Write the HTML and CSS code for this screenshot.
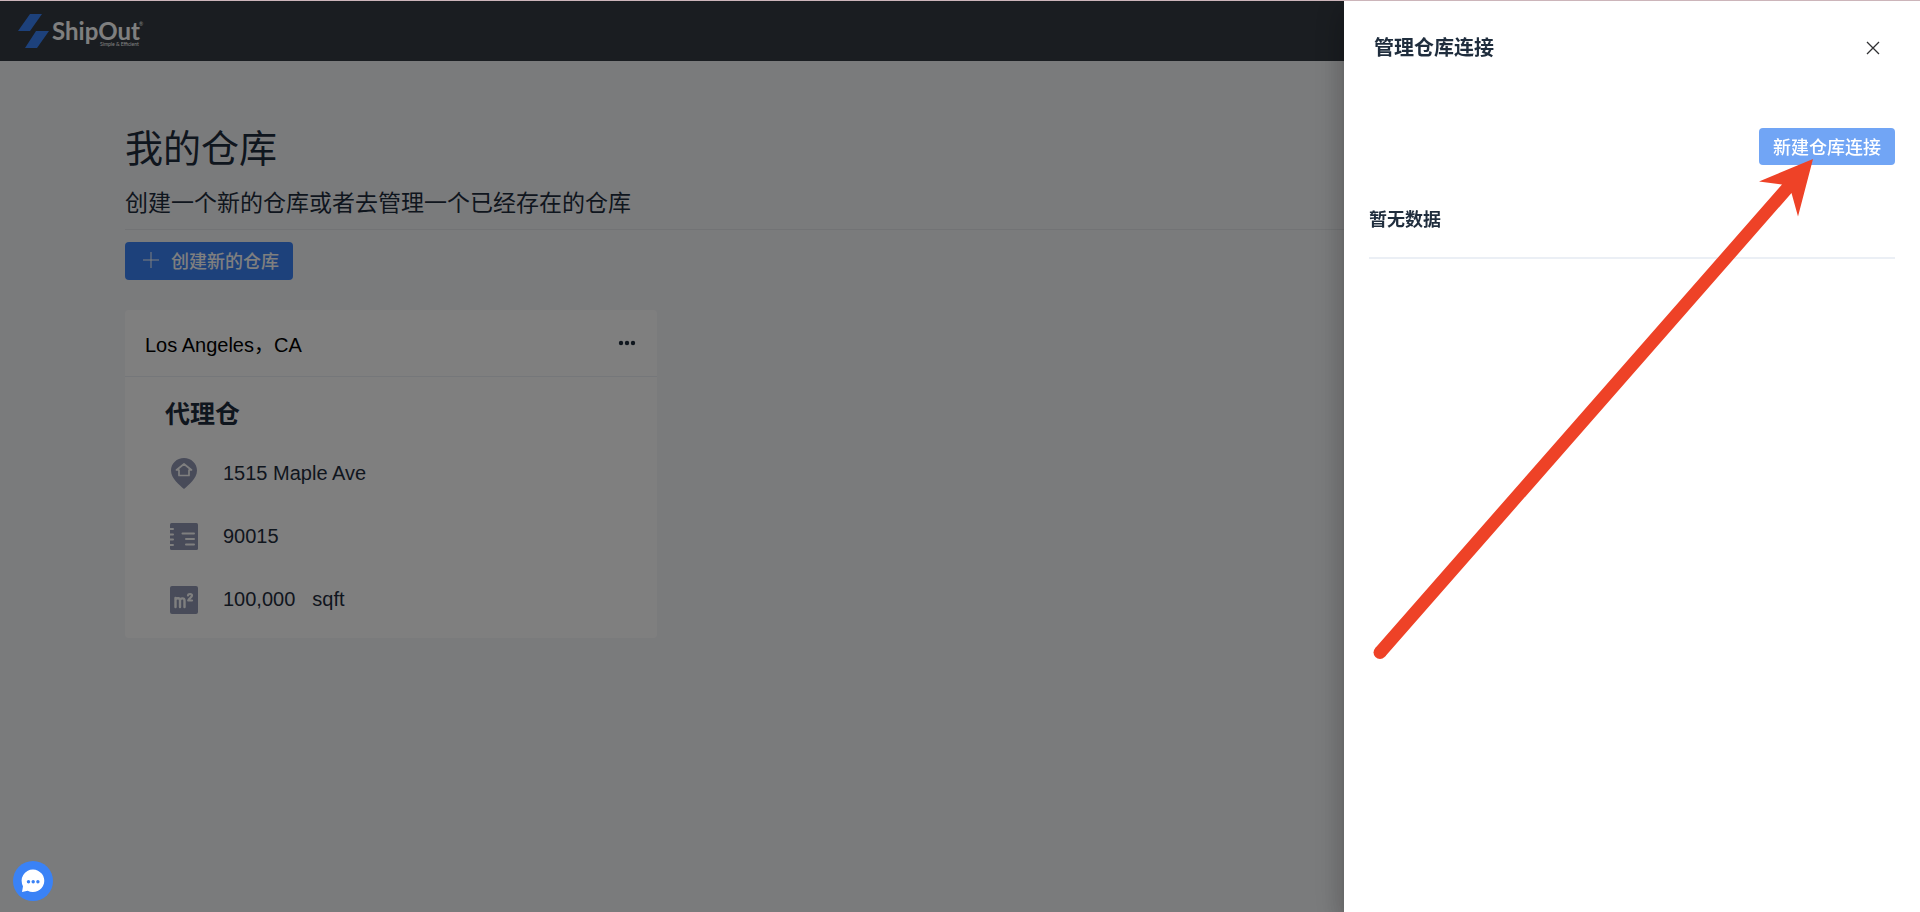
FILE: index.html
```html
<!DOCTYPE html>
<html lang="zh-CN">
<head>
    <meta charset="UTF-8">
    <meta name="viewport" content="width=device-width, initial-scale=1.0">
    <title>ShipOut</title>
    <link rel="stylesheet" href="styles.css">
</head>
<body>
    <header class="header">
        <a href="#" class="logo" aria-label="ShipOut">
            <svg width="128" height="40" viewBox="0 0 128 40">
                <path fill="#3a82f6" d="M12 3h12L12 20H0zM18 20h13L19 37H7z"/>
                <text class="logo-name" x="34" y="29">ShipOut</text>
                <text class="logo-tag" x="82" y="35">Simple &amp; Efficient</text>
                <text class="logo-tag" x="121" y="15">®</text>
            </svg>
        </a>
    </header>

    <main class="page">
        <h1 class="page-title">我的仓库</h1>
        <p class="page-subtitle">创建一个新的仓库或者去管理一个已经存在的仓库</p>
        <button type="button" class="btn btn-create">
            <svg width="16" height="16" viewBox="0 0 16 16" stroke="#fff" fill="none"><path d="M8 0v16M0 8h16"/></svg>
            <span>创建新的仓库</span>
        </button>

        <div class="cards">
            <section class="card">
                <div class="card-header">
                    <span>Los Angeles&#xFF0C;CA</span>
                    <button type="button" class="card-more" aria-label="更多">
                        <svg width="20" height="6" viewBox="0 0 20 6" fill="#1f2d3d"><circle cx="4" cy="3" r="2.200"/><circle cx="10" cy="3" r="2.200"/><circle cx="16" cy="3" r="2.200"/></svg>
                    </button>
                </div>
                <div class="card-body">
                    <h2 class="card-title">代理仓</h2>
                    <ul class="info">
                        <li>
                            <svg width="28" height="32" viewBox="0 0 28 32">
                                <path fill="#9197b3" d="M14 0C6.800 0 1 5.500 1 12.500c0 8 8.500 14.500 13 18.500C18.500 27 27 20.500 27 12.500 27 5.500 21.200 0 14 0z"/>
                                <path fill="none" stroke="#fff" stroke-width="1.700" stroke-linejoin="round" stroke-linecap="round" d="M6.500 12L14 6l7.500 6H19v5.500H9V12z"/>
                            </svg>
                            <span>1515 Maple Ave</span>
                        </li>
                        <li>
                            <svg width="28" height="28" viewBox="0 0 28 28">
                                <rect width="28" height="27" rx="1.500" fill="#9197b3"/>
                                <path stroke="#fff" stroke-width="2" stroke-linecap="round" d="M12.500 10.500H24M16 16h8M16 21.500h8M0 6h3M0 11.500h3M0 16.500h3M0 22h3"/>
                            </svg>
                            <span>90015</span>
                        </li>
                        <li>
                            <svg width="28" height="28" viewBox="0 0 28 28">
                                <rect width="28" height="28" rx="2" fill="#9197b3"/>
                                <path fill="none" stroke="#fff" stroke-width="2.400" stroke-linecap="round" stroke-linejoin="round" d="M5.500 21v-9M5.500 13.500c1-1.800 4.500-1.800 4.500.8V21M10 14.300c.5-2.600 4.500-2.600 4.500.2V21"/>
                                <path fill="none" stroke="#fff" stroke-width="2.200" stroke-linecap="round" stroke-linejoin="round" d="M18 9.500c.2-2 4-2 4 0 0 1.500-2.500 2.500-3.800 5H22"/>
                            </svg>
                            <span>100,000</span>
                            <span class="unit">sqft</span>
                        </li>
                    </ul>
                </div>
            </section>
        </div>
    </main>

    <div class="mask">
        <aside class="drawer" role="dialog" aria-labelledby="drawerTitle">
            <div class="drawer-header">
                <h2 class="drawer-title" id="drawerTitle">管理仓库连接</h2>
                <button type="button" class="drawer-close" aria-label="关闭">
                    <svg width="14" height="14" viewBox="0 0 14 14" stroke="#303133" stroke-width="1.300"><path d="M1 1l12 12M13 1L1 13"/></svg>
                </button>
            </div>
            <div class="drawer-body">
                <button type="button" class="btn btn-connect">新建仓库连接</button>
                <p class="empty">暂无数据</p>
            </div>
            <svg class="arrow" width="450" height="510" viewBox="0 0 450 510" fill="#ee4227">
                <circle cx="10" cy="497.500" r="6.500"/>
                <path d="M443 4L389 26.500 412 29.500 5.100 493.200 14.900 501.800 421.500 38 428 61.500z"/>
            </svg>
        </aside>
    </div>

    <button type="button" class="chat" aria-label="在线客服">
        <svg width="24" height="24" viewBox="0 0 24 24">
            <path fill="#fff" d="M12 .5a11.300 11.300 0 1 1-5.300 21.300L1 23l1-5.800A11.300 11.300 0 0 1 12 .5z"/>
            <g fill="#3a82f6"><circle cx="7.500" cy="12.700" r="1.700"/><circle cx="12.200" cy="12.700" r="1.700"/><circle cx="16.900" cy="12.700" r="1.700"/></g>
        </svg>
    </button>
</body>
</html>
```

FILE: styles.css
```css
/* ===== BASE ===== */
* {
    margin: 0;
    padding: 0;
    box-sizing: border-box;
}

body {
    min-height: 100vh;
    border-top: 1px solid #ccb5ba;
    background: #f5f7f9;
    color: #1f2d3d;
    font-family: "Liberation Sans", "Noto Sans CJK SC", sans-serif;
    font-size: 20px;
}

button {
    border: none;
    background: none;
    font-family: inherit;
    cursor: pointer;
}

svg {
    display: block;
    flex-shrink: 0;
}

.btn {
    padding: 0 14px 2px;
    border-radius: 4px;
    color: #fff;
    font-size: 18px;
    font-weight: 500;
}

/* ===== HEADER ===== */
.header {
    display: flex;
    align-items: center;
    height: 60px;
    padding: 0 18px;
    background: #343a42;
}

.logo-name {
    fill: #fff;
    font-family: Lato, sans-serif;
    font-size: 24px;
    font-weight: 700;
}

.logo-tag {
    fill: #fff;
    font-family: Lato, sans-serif;
    font-size: 5px;
}

/* ===== PAGE ===== */
.page {
    padding: 62px 125px;
}

.page-title {
    font-size: 38px;
    font-weight: 400;
    line-height: 52px;
}

.page-subtitle {
    margin-bottom: 12px;
    padding: 13px 0 10px;
    border-bottom: 1px solid #e4e7ea;
    font-size: 23px;
    font-weight: 400;
    line-height: 31px;
}

.btn-create {
    display: flex;
    align-items: center;
    gap: 12px;
    height: 38px;
    padding-left: 18px;
    background: #3a82f6;
}

/* ===== CARDS ===== */
.cards {
    display: grid;
    grid-template-columns: repeat(3, 1fr);
    gap: 37px;
    margin-top: 30px;
}

.card {
    border-radius: 4px;
    background: #fff;
}

.card-header {
    display: flex;
    align-items: center;
    justify-content: space-between;
    height: 67px;
    padding: 0 20px;
    border-bottom: 1px solid #ebeef5;
    color: #000;
}

.card-body {
    padding: 19px 40px 7px;
}

.card-title {
    font-size: 25px;
    line-height: 36px;
}

.info {
    padding: 10px 5px 0;
    list-style: none;
}

.info li {
    display: flex;
    align-items: center;
    gap: 25px;
    height: 63px;
}

.info .unit {
    margin-left: -8px;
}

/* ===== DRAWER ===== */
.mask {
    position: fixed;
    top: 1px;
    right: 0;
    bottom: 0;
    left: 0;
    display: flex;
    justify-content: flex-end;
    overflow: hidden;
    background: rgba(0, 0, 0, 0.5);
}

.drawer {
    position: relative;
    width: 30%;
    background: #fff;
    box-shadow: 0 8px 10px -5px rgba(0, 0, 0, 0.2),
                0 16px 24px 2px rgba(0, 0, 0, 0.14),
                0 6px 30px 5px rgba(0, 0, 0, 0.12);
}

.drawer-header {
    display: flex;
    align-items: center;
    justify-content: space-between;
    padding: 31px 40px 0 30px;
}

.drawer-title {
    font-size: 20px;
    line-height: 32px;
}

.drawer-body {
    display: flex;
    flex-direction: column;
    padding: 64px 25px;
}

.btn-connect {
    align-self: flex-end;
    height: 37px;
    background: #71a5f5;
}

.empty {
    margin-top: 42px;
    padding-bottom: 23px;
    border-bottom: 2px solid #ebeff5;
    font-size: 18px;
    font-weight: 700;
    line-height: 27px;
}

.arrow {
    position: absolute;
    top: 154px;
    right: 100px;
    pointer-events: none;
}

/* ===== CHAT ===== */
.chat {
    position: fixed;
    bottom: 11px;
    left: 13px;
    display: flex;
    align-items: center;
    justify-content: center;
    width: 40px;
    height: 40px;
    border-radius: 50%;
    background: #3a82f6;
}
```
